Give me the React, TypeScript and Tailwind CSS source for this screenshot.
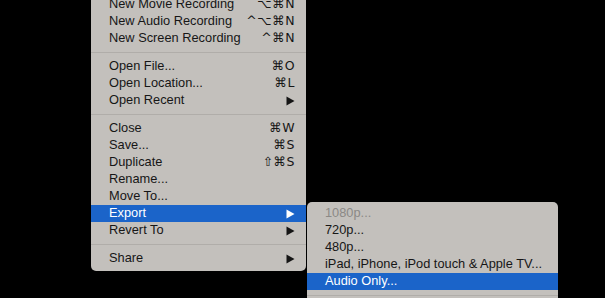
import React from "react";

type Item =
  | { kind: "sep" }
  | { kind: "item"; label: string; shortcut?: string; arrow?: boolean; active?: boolean; disabled?: boolean };

const mainItems: Item[] = [
  { kind: "item", label: "New Movie Recording", shortcut: "⌥⌘N" },
  { kind: "item", label: "New Audio Recording", shortcut: "^⌥⌘N" },
  { kind: "item", label: "New Screen Recording", shortcut: "^⌘N" },
  { kind: "sep" },
  { kind: "item", label: "Open File...", shortcut: "⌘O" },
  { kind: "item", label: "Open Location...", shortcut: "⌘L" },
  { kind: "item", label: "Open Recent", arrow: true },
  { kind: "sep" },
  { kind: "item", label: "Close", shortcut: "⌘W" },
  { kind: "item", label: "Save...", shortcut: "⌘S" },
  { kind: "item", label: "Duplicate", shortcut: "⇧⌘S" },
  { kind: "item", label: "Rename..." },
  { kind: "item", label: "Move To..." },
  { kind: "item", label: "Export", arrow: true, active: true },
  { kind: "item", label: "Revert To", arrow: true },
  { kind: "sep" },
  { kind: "item", label: "Share", arrow: true },
];

// submenu runs past the bottom of the window, only the separator shows
const exportItems: Item[] = [
  { kind: "item", label: "1080p...", disabled: true },
  { kind: "item", label: "720p..." },
  { kind: "item", label: "480p..." },
  { kind: "item", label: "iPad, iPhone, iPod touch & Apple TV..." },
  { kind: "item", label: "Audio Only...", active: true },
  { kind: "sep" },
];

function Arrow({ white }: { white?: boolean }) {
  return (
    <svg width="9" height="10" viewBox="0 0 9 10" className={white ? "fill-white" : "fill-[#151515]"}>
      <polygon points="0.5,0.5 8.5,5 0.5,9.5" />
    </svg>
  );
}

function Row({ item }: { item: Item }) {
  if (item.kind === "sep") {
    return (
      <div className="flex h-[11px] items-center">
        <div className="h-px w-full bg-[#b0ada9]" />
      </div>
    );
  }
  const text = item.active ? "text-white" : item.disabled ? "text-[#8b8986]" : "text-[#161616]";
  return (
    <div
      className={`flex h-[17px] items-center justify-between pl-[18px] pr-[11px] ${
        item.active ? "bg-[#1b64c9]" : ""
      } ${text}`}
    >
      <span className="whitespace-nowrap">{item.label}</span>
      {item.shortcut && (
        <span className="whitespace-nowrap font-['DejaVu_Sans',sans-serif] text-[12.5px] tracking-[0.5px]">
          {item.shortcut}
        </span>
      )}
      {item.arrow && <Arrow white={item.active} />}
    </div>
  );
}

export default function App() {
  return (
    <div className="relative h-[298px] w-[605px] overflow-hidden bg-black font-['Liberation_Sans',Arial,sans-serif] text-[12.8px] leading-none">
      <div className="ml-[91px] mt-[-8px] flex items-start">
        <div className="w-[215px] rounded-[5px] bg-[#c3c0bc] py-[4px]">
          {mainItems.map((it, i) => (
            <Row key={i} item={it} />
          ))}
        </div>
        <div className="ml-[1px] mt-[210px] w-[251px] rounded-[5px] bg-[#c3c0bc] py-[3px]">
          {exportItems.map((it, i) => (
            <Row key={i} item={it} />
          ))}
        </div>
      </div>
    </div>
  );
}
